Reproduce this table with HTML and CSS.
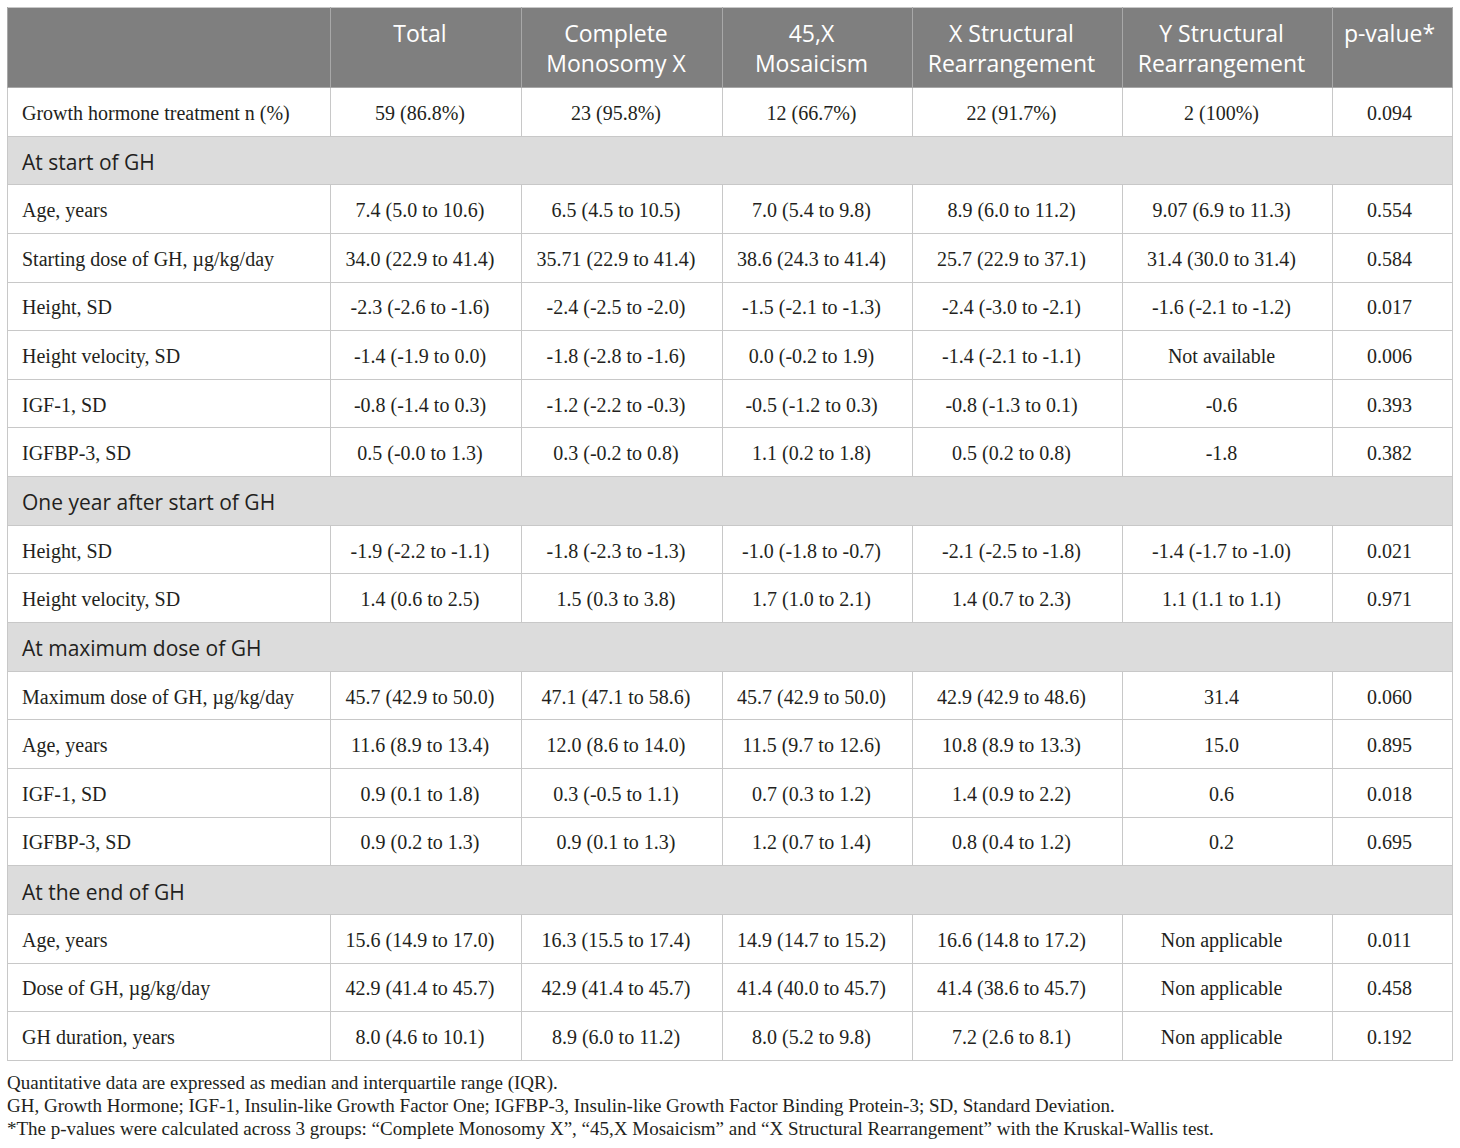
FILE: index.html
```html
<!DOCTYPE html>
<html lang="en">

<head>
    <meta charset="UTF-8">
    <title>Growth hormone treatment by karyotype</title>
    <link rel="stylesheet" href="styles.css">
</head>

<body>
    <table class="data-table">
        <colgroup>
            <col class="col-label">
            <col class="col-total">
            <col class="col-cmx">
            <col class="col-mos">
            <col class="col-xsr">
            <col class="col-ysr">
            <col class="col-p">
        </colgroup>
        <thead>
            <tr>
                <th></th>
                <th>Total</th>
                <th>Complete<br>Monosomy X</th>
                <th>45,X<br>Mosaicism</th>
                <th>X Structural<br>Rearrangement</th>
                <th>Y Structural<br>Rearrangement</th>
                <th>p-value*</th>
            </tr>
        </thead>
        <tbody>
            <tr>
                <td>Growth hormone treatment n (%)</td>
                <td>59 (86.8%)</td>
                <td>23 (95.8%)</td>
                <td>12 (66.7%)</td>
                <td>22 (91.7%)</td>
                <td>2 (100%)</td>
                <td>0.094</td>
            </tr>
            <tr class="section">
                <td colspan="7">At start of GH</td>
            </tr>
            <tr>
                <td>Age, years</td>
                <td>7.4 (5.0 to 10.6)</td>
                <td>6.5 (4.5 to 10.5)</td>
                <td>7.0 (5.4 to 9.8)</td>
                <td>8.9 (6.0 to 11.2)</td>
                <td>9.07 (6.9 to 11.3)</td>
                <td>0.554</td>
            </tr>
            <tr>
                <td>Starting dose of GH, µg/kg/day</td>
                <td>34.0 (22.9 to 41.4)</td>
                <td>35.71 (22.9 to 41.4)</td>
                <td>38.6 (24.3 to 41.4)</td>
                <td>25.7 (22.9 to 37.1)</td>
                <td>31.4 (30.0 to 31.4)</td>
                <td>0.584</td>
            </tr>
            <tr>
                <td>Height, SD</td>
                <td>-2.3 (-2.6 to -1.6)</td>
                <td>-2.4 (-2.5 to -2.0)</td>
                <td>-1.5 (-2.1 to -1.3)</td>
                <td>-2.4 (-3.0 to -2.1)</td>
                <td>-1.6 (-2.1 to -1.2)</td>
                <td>0.017</td>
            </tr>
            <tr>
                <td>Height velocity, SD</td>
                <td>-1.4 (-1.9 to 0.0)</td>
                <td>-1.8 (-2.8 to -1.6)</td>
                <td>0.0 (-0.2 to 1.9)</td>
                <td>-1.4 (-2.1 to -1.1)</td>
                <td>Not available</td>
                <td>0.006</td>
            </tr>
            <tr>
                <td>IGF-1, SD</td>
                <td>-0.8 (-1.4 to 0.3)</td>
                <td>-1.2 (-2.2 to -0.3)</td>
                <td>-0.5 (-1.2 to 0.3)</td>
                <td>-0.8 (-1.3 to 0.1)</td>
                <td>-0.6</td>
                <td>0.393</td>
            </tr>
            <tr>
                <td>IGFBP-3, SD</td>
                <td>0.5 (-0.0 to 1.3)</td>
                <td>0.3 (-0.2 to 0.8)</td>
                <td>1.1 (0.2 to 1.8)</td>
                <td>0.5 (0.2 to 0.8)</td>
                <td>-1.8</td>
                <td>0.382</td>
            </tr>
            <tr class="section">
                <td colspan="7">One year after start of GH</td>
            </tr>
            <tr>
                <td>Height, SD</td>
                <td>-1.9 (-2.2 to -1.1)</td>
                <td>-1.8 (-2.3 to -1.3)</td>
                <td>-1.0 (-1.8 to -0.7)</td>
                <td>-2.1 (-2.5 to -1.8)</td>
                <td>-1.4 (-1.7 to -1.0)</td>
                <td>0.021</td>
            </tr>
            <tr>
                <td>Height velocity, SD</td>
                <td>1.4 (0.6 to 2.5)</td>
                <td>1.5 (0.3 to 3.8)</td>
                <td>1.7 (1.0 to 2.1)</td>
                <td>1.4 (0.7 to 2.3)</td>
                <td>1.1 (1.1 to 1.1)</td>
                <td>0.971</td>
            </tr>
            <tr class="section">
                <td colspan="7">At maximum dose of GH</td>
            </tr>
            <tr>
                <td>Maximum dose of GH, µg/kg/day</td>
                <td>45.7 (42.9 to 50.0)</td>
                <td>47.1 (47.1 to 58.6)</td>
                <td>45.7 (42.9 to 50.0)</td>
                <td>42.9 (42.9 to 48.6)</td>
                <td>31.4</td>
                <td>0.060</td>
            </tr>
            <tr>
                <td>Age, years</td>
                <td>11.6 (8.9 to 13.4)</td>
                <td>12.0 (8.6 to 14.0)</td>
                <td>11.5 (9.7 to 12.6)</td>
                <td>10.8 (8.9 to 13.3)</td>
                <td>15.0</td>
                <td>0.895</td>
            </tr>
            <tr>
                <td>IGF-1, SD</td>
                <td>0.9 (0.1 to 1.8)</td>
                <td>0.3 (-0.5 to 1.1)</td>
                <td>0.7 (0.3 to 1.2)</td>
                <td>1.4 (0.9 to 2.2)</td>
                <td>0.6</td>
                <td>0.018</td>
            </tr>
            <tr>
                <td>IGFBP-3, SD</td>
                <td>0.9 (0.2 to 1.3)</td>
                <td>0.9 (0.1 to 1.3)</td>
                <td>1.2 (0.7 to 1.4)</td>
                <td>0.8 (0.4 to 1.2)</td>
                <td>0.2</td>
                <td>0.695</td>
            </tr>
            <tr class="section">
                <td colspan="7">At the end of GH</td>
            </tr>
            <tr>
                <td>Age, years</td>
                <td>15.6 (14.9 to 17.0)</td>
                <td>16.3 (15.5 to 17.4)</td>
                <td>14.9 (14.7 to 15.2)</td>
                <td>16.6 (14.8 to 17.2)</td>
                <td>Non applicable</td>
                <td>0.011</td>
            </tr>
            <tr>
                <td>Dose of GH, µg/kg/day</td>
                <td>42.9 (41.4 to 45.7)</td>
                <td>42.9 (41.4 to 45.7)</td>
                <td>41.4 (40.0 to 45.7)</td>
                <td>41.4 (38.6 to 45.7)</td>
                <td>Non applicable</td>
                <td>0.458</td>
            </tr>
            <tr>
                <td>GH duration, years</td>
                <td>8.0 (4.6 to 10.1)</td>
                <td>8.9 (6.0 to 11.2)</td>
                <td>8.0 (5.2 to 9.8)</td>
                <td>7.2 (2.6 to 8.1)</td>
                <td>Non applicable</td>
                <td>0.192</td>
            </tr>
        </tbody>
    </table>

    <div class="notes">
        <p>Quantitative data are expressed as median and interquartile range (IQR).</p>
        <p>GH, Growth Hormone; IGF-1, Insulin-like Growth Factor One; IGFBP-3, Insulin-like Growth Factor Binding Protein-3; SD, Standard Deviation.</p>
        <p>*The p-values were calculated across 3 groups: “Complete Monosomy X”, “45,X Mosaicism” and “X Structural Rearrangement” with the Kruskal-Wallis test.</p>
    </div>
</body>

</html>
```

FILE: styles.css
```css
body {
    margin: 0;
    padding: 7px;
    background: #ffffff;
    color: #231f20;
    font-family: 'Liberation Serif', 'Times New Roman', serif;
}

.data-table {
    width: 1446px;
    border-collapse: collapse;
    table-layout: fixed;
    border: 1px solid #c8c8c8;
}

.col-label { width: 323px; }
.col-total { width: 191px; }
.col-cmx { width: 201px; }
.col-mos { width: 190px; }
.col-xsr { width: 210px; }
.col-ysr { width: 210px; }
.col-p { width: 120px; }

.data-table th {
    height: 80px;
    padding: 10px 14px 0 2px;
    box-sizing: border-box;
    background-color: #7f7f7f;
    color: #ffffff;
    font-family: 'Open Sans', 'Noto Sans', sans-serif;
    font-weight: normal;
    font-size: 23px;
    line-height: 30px;
    vertical-align: top;
    white-space: nowrap;
    border: 1px solid #a8a8a8;
    border-top: none;
}

.data-table th:last-child {
    padding: 10px 6px 0 0;
}

.data-table td {
    height: 48.65px;
    box-sizing: border-box;
    padding: 3px 14px 0 2px;
    border: 1px solid #c8c8c8;
    text-align: center;
    font-size: 20px;
    white-space: nowrap;
}

.data-table td:last-child {
    padding: 3px 8px 0 2px;
}

.data-table td:first-child {
    text-align: left;
    padding-left: 14px;
}

.section td {
    background-color: #dcdcdc;
    font-family: 'Open Sans', 'Noto Sans', sans-serif;
    font-size: 21px;
}

.notes {
    margin-top: 10px;
    font-size: 19px;
    line-height: 23px;
}

.notes p {
    margin: 0;
}
```
